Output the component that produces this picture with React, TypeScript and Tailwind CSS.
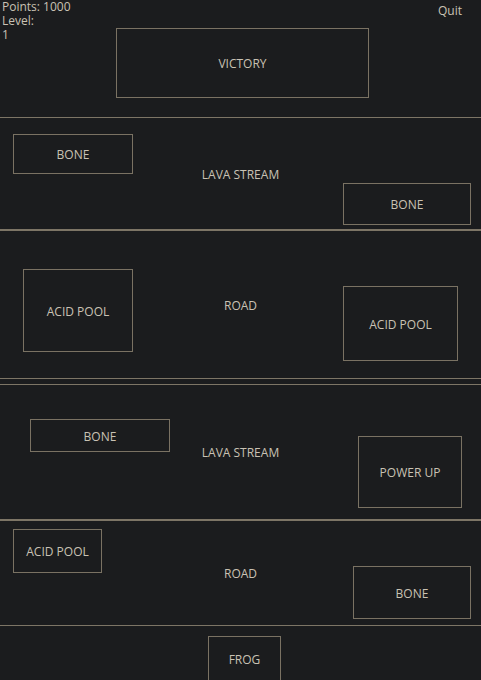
import React from "react";

type Obs = { label: string; left: number; top: number; w: number; h: number };

const Box = ({ o }: { o: Obs }) => (
  <div
    className="absolute flex items-center justify-center border border-[#7a7263] pt-[2px] text-[12px]"
    style={{ left: o.left, top: o.top, width: o.w, height: o.h }}
  >
    {o.label}
  </div>
);

const Lane = ({
  name,
  height,
  obs,
}: {
  name: string;
  height: number;
  obs: Obs[];
}) => (
  <div
    className="relative flex items-center justify-center border-y border-[#7d7566] pt-[2px] text-[12px]"
    style={{ height }}
  >
    <span>{name}</span>
    {obs.map((o, i) => (
      <Box key={i} o={o} />
    ))}
  </div>
);

export default function App() {
  return (
    <div
      className="min-h-[680px] w-full overflow-hidden bg-[#1b1c1e] text-[#c9c2b4]"
      style={{ fontFamily: '"Open Sans", "Noto Sans", sans-serif' }}
    >
      <div className="relative h-[117px] pt-[28px]">
        <div className="absolute left-[2px] top-0 text-[12px] leading-[14px]">
          <div>Points: 1000</div>
          <div>Level:</div>
          <div>1</div>
        </div>
        <div className="absolute right-[19px] top-[3px] text-[12px] leading-[16px]">Quit</div>
        <div className="ml-[116px] flex h-[70px] w-[253px] items-center justify-center border border-[#7a7263] pt-[2px] text-[12px]">
          VICTORY
        </div>
      </div>
      <Lane
        name="LAVA STREAM"
        height={113}
        obs={[
          { label: "BONE", left: 13, top: 16, w: 120, h: 40 },
          { label: "BONE", left: 343, top: 65, w: 128, h: 42 },
        ]}
      />
      <Lane
        name="ROAD"
        height={149}
        obs={[
          { label: "ACID POOL", left: 23, top: 38, w: 110, h: 83 },
          { label: "ACID POOL", left: 343, top: 55, w: 115, h: 75 },
        ]}
      />
      <div className="h-[5px]" />
      <Lane
        name="LAVA STREAM"
        height={136}
        obs={[
          { label: "BONE", left: 30, top: 34, w: 140, h: 33 },
          { label: "POWER UP", left: 358, top: 51, w: 104, h: 72 },
        ]}
      />
      <Lane
        name="ROAD"
        height={106}
        obs={[
          { label: "ACID POOL", left: 13, top: 8, w: 89, h: 44 },
          { label: "BONE", left: 353, top: 45, w: 118, h: 53 },
        ]}
      />
      <div className="h-[60px] pt-[10px]">
        <div className="ml-[208px] flex h-[46px] w-[73px] items-center justify-center border border-[#7a7263] pt-[2px] text-[12px]">
          FROG
        </div>
      </div>
    </div>
  );
}
